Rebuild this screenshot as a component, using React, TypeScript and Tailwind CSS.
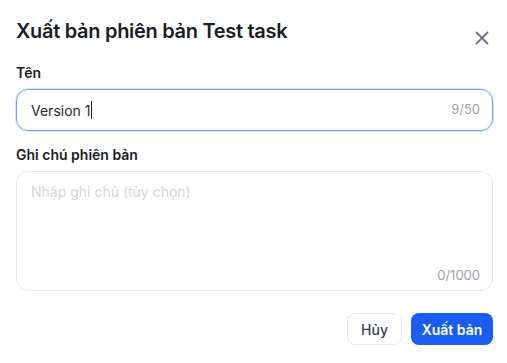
import React from "react";

export default function App() {
  return (
    <div
      className="w-[507px] h-[363px] bg-white pl-4 pr-[14px] pt-[17px]"
      style={{ fontFamily: "Inter, 'Noto Sans', sans-serif" }}
    >
      <div className="flex items-start justify-between">
        <h2 className="text-[20px] leading-[28px] font-semibold text-[#1a1d26] tracking-[-0.3px]">
          Xuất bản phiên bản Test task
        </h2>
        <button className="mt-[14px] mr-[4px] text-[#6b7280]">
          <svg width="14" height="14" viewBox="0 0 14 14" fill="none">
            <path d="M1.5 1.5L12.5 12.5M12.5 1.5L1.5 12.5" stroke="currentColor" strokeWidth="1.8" strokeLinecap="round" />
          </svg>
        </button>
      </div>

      <div className="mt-[18px] text-[14px] leading-[20px] font-semibold text-[#1a1d26]">Tên</div>
      <div className="mt-[6px] h-[42px] rounded-[12px] border border-[#6aa6f8] shadow-[0_0_0_1px_rgba(96,165,250,0.25)] flex items-center justify-between pl-[14px] pr-[12px]">
        <span className="text-[14px] text-[#1f2937] flex items-center">
          Version 1<span className="inline-block w-px h-[18px] bg-[#111827] ml-px" />
        </span>
        <span className="text-[13px] text-[#9ca3af]">9/50</span>
      </div>

      <div className="mt-[14px] text-[14px] leading-[20px] font-semibold text-[#1a1d26]">Ghi chú phiên bản</div>
      <div className="mt-[6px] h-[120px] rounded-[12px] border border-[#e5e7eb] flex flex-col justify-between pl-[14px] pr-[12px] pt-[10px] pb-[5px]">
        <span className="text-[14px] leading-[20px] text-[#d1d5db]">Nhập ghi chú (tùy chọn)</span>
        <span className="self-end text-[13px] leading-[20px] text-[#9ca3af]">0/1000</span>
      </div>

      <div className="mt-[22px] flex justify-end gap-[9px]">
        <button className="h-[32px] w-[55px] rounded-[8px] border border-[#e5e7eb] text-[14px] font-medium text-[#374151]">
          Hủy
        </button>
        <button className="h-[32px] w-[82px] rounded-[8px] bg-[#1a5cf0] text-[14px] font-semibold text-white">
          Xuất bản
        </button>
      </div>
    </div>
  );
}
